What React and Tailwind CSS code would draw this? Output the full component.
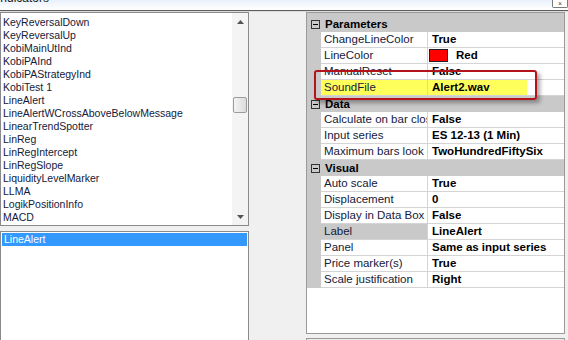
import React from 'react';

const items = [
  'KeyReversalDown',
  'KeyReversalUp',
  'KobiMainUtInd',
  'KobiPAInd',
  'KobiPAStrategyInd',
  'KobiTest 1',
  'LineAlert',
  'LineAlertWCrossAboveBelowMessage',
  'LinearTrendSpotter',
  'LinReg',
  'LinRegIntercept',
  'LinRegSlope',
  'LiquidityLevelMarker',
  'LLMA',
  'LogikPositionInfo',
  'MACD',
];

const groups = [
  {
    name: 'Parameters',
    rows: [
      { k: 'ChangeLineColor', v: 'True' },
      { k: 'LineColor', v: 'Red', swatch: true },
      { k: 'ManualReset', v: 'False' },
      { k: 'SoundFile', v: 'Alert2.wav', mark: true },
    ],
  },
  {
    name: 'Data',
    rows: [
      { k: 'Calculate on bar close', v: 'False' },
      { k: 'Input series', v: 'ES 12-13 (1 Min)' },
      { k: 'Maximum bars look back', v: 'TwoHundredFiftySix' },
    ],
  },
  {
    name: 'Visual',
    rows: [
      { k: 'Auto scale', v: 'True' },
      { k: 'Displacement', v: '0' },
      { k: 'Display in Data Box', v: 'False' },
      { k: 'Label', v: 'LineAlert', selected: true },
      { k: 'Panel', v: 'Same as input series' },
      { k: 'Price marker(s)', v: 'True' },
      { k: 'Scale justification', v: 'Right' },
    ],
  },
];

function Collapse() {
  return (
    <span className="w-[9px] h-[9px] border border-[#333] flex items-center justify-center">
      <span className="w-[5px] h-px bg-black" />
    </span>
  );
}

function PropRow({ row }) {
  const nameBg = row.mark ? 'bg-[#ffff5c]' : row.selected ? 'bg-[#c9c9c9]' : 'bg-white';
  return (
    <div className="flex h-[16px]">
      <div className="w-[14px] shrink-0 bg-[#c9c9c9]" />
      <div className={`w-[107px] shrink-0 border-r border-b border-[#d4d4d4] pl-[3px] overflow-hidden whitespace-nowrap leading-[15px] text-[#14203a] ${nameBg}`}>
        {row.k}
      </div>
      <div className="flex-1 bg-white border-b border-[#d4d4d4] overflow-hidden whitespace-nowrap font-bold text-black leading-[15px]">
        {row.swatch ? (
          <div className="flex items-center h-[15px] pl-px">
            <span className="w-[19px] h-[13px] bg-[#ff0000] border border-[#222]" />
            <span className="ml-[8px]">{row.v}</span>
          </div>
        ) : row.mark ? (
          <div className="w-[99px] h-[15px] bg-[#ffff5c] pl-[4px]">{row.v}</div>
        ) : (
          <div className="pl-[4px]">{row.v}</div>
        )}
      </div>
    </div>
  );
}

export default function App() {
  return (
    <div className="w-[568px] h-[340px] overflow-hidden bg-[#f0f0f0] relative" style={{ fontFamily: '"Liberation Sans", Arial, sans-serif' }}>
      {/* title strip */}
      <div className="h-[10px] bg-gradient-to-b from-[#e9f1fa] to-white overflow-hidden flex justify-between">
        <div className="ml-[-3px] mt-[-8px] text-[12px] leading-[12px] text-[#1e1e1e]">Indicators</div>
        <div className="w-[16px] h-[8px] border border-t-0 border-[#7a7a7a] bg-white rounded-b-[2px] flex items-center justify-center text-[7px] leading-none text-[#444]">
          ×
        </div>
      </div>
      <div className="h-px bg-[#5e5e5e]" />
      <div className="h-px bg-[#dcdcdc]" />

      <div className="flex">
        {/* left column */}
        <div className="w-[249px] shrink-0 flex flex-col">
          <div className="h-[214px] border border-[#8a8a8a] bg-white flex overflow-hidden">
            <div className="flex-1 pt-[3px] pl-[2px] text-[10.5px] leading-[13px] text-[#14203a] whitespace-nowrap overflow-hidden">
              {items.map((it) => (
                <div key={it} className="h-[13px]">{it}</div>
              ))}
            </div>
            <div className="w-[16px] shrink-0 bg-[#f4f4f4] flex flex-col items-center relative">
              <div className="h-[17px] w-full flex items-center justify-center">
                <svg width="7" height="4" viewBox="0 0 7 4"><path d="M0 4 L3.5 0 L7 4 Z" fill="#555" /></svg>
              </div>
              <div className="flex-1 w-full" />
              <div className="h-[17px] w-full flex items-center justify-center">
                <svg width="7" height="4" viewBox="0 0 7 4"><path d="M0 0 L3.5 4 L7 0 Z" fill="#555" /></svg>
              </div>
              <div className="absolute left-px top-[84px] w-[14px] h-[16px] rounded-[2px] border border-[#9b9b9b] bg-gradient-to-r from-[#f3f3f3] to-[#dcdcdc]" />
            </div>
          </div>
          <div className="mt-[5px] h-[120px] border border-[#8a8a8a] bg-white pt-px px-px">
            <div className="h-[13px] bg-[#3399ff] text-white text-[10.5px] leading-[13px] pl-[2px]">LineAlert</div>
          </div>
        </div>

        {/* property grid */}
        <div className="ml-[57px] w-[259px] shrink-0 flex flex-col">
          <div className="relative h-[322px] border border-[#9a9a9a] bg-white text-[11.5px] flex flex-col">
            <div className="h-[3px] bg-[#c9c9c9]" />
            {groups.map((g) => (
              <div key={g.name}>
                <div className="h-[16px] bg-[#c9c9c9] flex items-center">
                  <div className="w-[14px] flex justify-center pl-[2px]">
                    <Collapse />
                  </div>
                  <span className="ml-[4px] font-bold text-black leading-[15px]">{g.name}</span>
                </div>
                {g.rows.map((r) => (
                  <PropRow key={r.k} row={r} />
                ))}
              </div>
            ))}
            {/* callout drawn over the SoundFile row */}
            <div className="absolute left-[7px] top-[57px] w-[223px] h-[30px] border-2 border-[#b3141c] rounded-[3px] shadow-[3px_3px_4px_rgba(0,0,0,0.35)]" />
          </div>
          <div className="mt-[4px] h-[20px] border border-[#9a9a9a] bg-[#ececec]" />
        </div>
      </div>
    </div>
  );
}
